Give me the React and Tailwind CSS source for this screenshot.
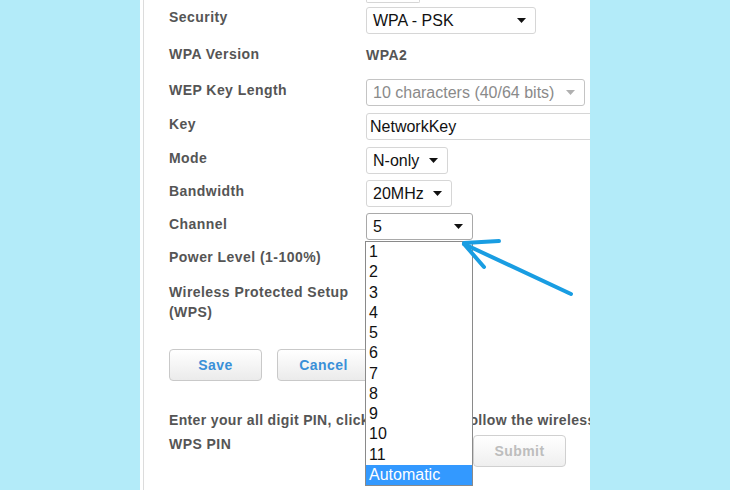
import React from 'react'

const LABEL = 'w-[197px] shrink-0 text-[14px] font-bold leading-[20px] tracking-[0.45px] text-[#555]'

function Caret({ color = '#111' }) {
  return (
    <svg width="9" height="5" viewBox="0 0 9 5" className="shrink-0">
      <path d="M0 0 L9 0 L4.5 5 Z" fill={color} />
    </svg>
  )
}

function Select({ value, width, disabled = false, focused = false }) {
  return (
    <div
      className={`flex h-[27px] items-center justify-between rounded-[3px] border bg-white pl-[6px] pr-[9px] text-[16px] ${
        disabled ? 'border-[#c4c4c4] text-[#8a8a8a]' : focused ? 'border-[#a9a9a9] text-[#111]' : 'border-[#d6d6d6] text-[#111]'
      }`}
      style={{ width }}
    >
      <span>{value}</span>
      <Caret color={disabled ? '#b0b0b0' : '#111'} />
    </div>
  )
}

function Row({ label, height, first = false, children }) {
  return (
    <div className="flex" style={{ height }}>
      <div className={`${LABEL} ${first ? 'pt-0' : 'pt-[1px]'}`}>{label}</div>
      <div>{children}</div>
    </div>
  )
}

const CHANNELS = ['1', '2', '3', '4', '5', '6', '7', '8', '9', '10', '11']

export default function App() {
  return (
    <div className="relative h-[490px] w-[730px] overflow-hidden bg-[#b3ebf9] font-['Liberation_Sans',Arial,sans-serif]">
      <div className="ml-[140px] h-full w-[450px] overflow-hidden bg-white pl-[3px]">
        <div className="h-full border-l border-[#dcdcdc] pl-[25px]">
          {/* bottom edge of the field above */}
          <div className="h-[3px]">
            <div className="ml-[197px] h-[3px] w-[54px] rounded-b-[2px] border-x border-b border-[#d6d6d6]" />
          </div>
          <div className="h-[4px]" />

          <Row label="Security" height={36} first>
            <Select value="WPA - PSK" width={170} />
          </Row>
          <Row label="WPA Version" height={36}>
            <div className="pt-[2px] text-[14px] font-bold leading-[20px] tracking-[0.45px] text-[#555]">WPA2</div>
          </Row>
          <Row label="WEP Key Length" height={34}>
            <Select value="10 characters (40/64 bits)" width={219} disabled />
          </Row>
          <Row label="Key" height={34}>
            <div className="flex h-[27px] w-[260px] items-center rounded-[3px] border border-[#d6d6d6] pl-[3px] text-[16px] text-[#111]">
              NetworkKey
            </div>
          </Row>
          <Row label="Mode" height={33}>
            <Select value="N-only" width={82} />
          </Row>
          <Row label="Bandwidth" height={33}>
            <Select value="20MHz" width={86} />
          </Row>
          <Row label="Channel" height={33}>
            <Select value="5" width={107} focused />
          </Row>
          <Row label="Power Level (1-100%)" height={35}>
            <div />
          </Row>
          <div className={`${LABEL} w-[200px] pt-[1px]`}>
            Wireless Protected Setup
            <br />
            (WPS)
          </div>

          <div className="mt-[27px] flex gap-[15px]">
            <button className="h-[32px] w-[93px] rounded-[4px] border border-[#c9c9c9] bg-gradient-to-b from-white to-[#ebebeb] text-[14px] font-bold tracking-[0.45px] text-[#3a90d8]">
              Save
            </button>
            <button className="h-[32px] w-[93px] rounded-[4px] border border-[#c9c9c9] bg-gradient-to-b from-white to-[#ebebeb] text-[14px] font-bold tracking-[0.45px] text-[#3a90d8]">
              Cancel
            </button>
          </div>

          <div className="mt-[29px] whitespace-nowrap text-[14px] font-bold leading-[20px] tracking-[0.35px] text-[#555]">
            Enter your all digit PIN, click OK and then follow the wireless setup steps.
          </div>
          <div className="mt-[4px] flex">
            <div className={`${LABEL} w-[304px]`}>WPS PIN</div>
            <button className="mt-[1px] h-[32px] w-[93px] rounded-[4px] border border-[#d0d0d0] bg-gradient-to-b from-white to-[#efefef] text-[14px] font-bold tracking-[0.45px] text-[#bdbdbd]">
              Submit
            </button>
          </div>
        </div>
      </div>

      {/* open channel list */}
      <div className="absolute left-[365px] top-[241px] w-[108px] border border-[#8a8a8a] bg-white text-[16px] leading-[20.25px] text-[#111]">
        {CHANNELS.map((c) => (
          <div key={c} className="pl-[3px]">
            {c}
          </div>
        ))}
        <div className="bg-[#3399ff] pl-[3px] text-white">Automatic</div>
      </div>

      {/* annotation arrow */}
      <svg className="pointer-events-none absolute left-0 top-0" width="730" height="490">
        <g stroke="#199de2" strokeWidth="4" strokeLinecap="round" fill="none">
          <line x1="571" y1="294" x2="464" y2="244" />
          <line x1="464" y1="243" x2="499" y2="241" />
          <line x1="464" y1="244" x2="484" y2="267" />
        </g>
      </svg>
    </div>
  )
}
